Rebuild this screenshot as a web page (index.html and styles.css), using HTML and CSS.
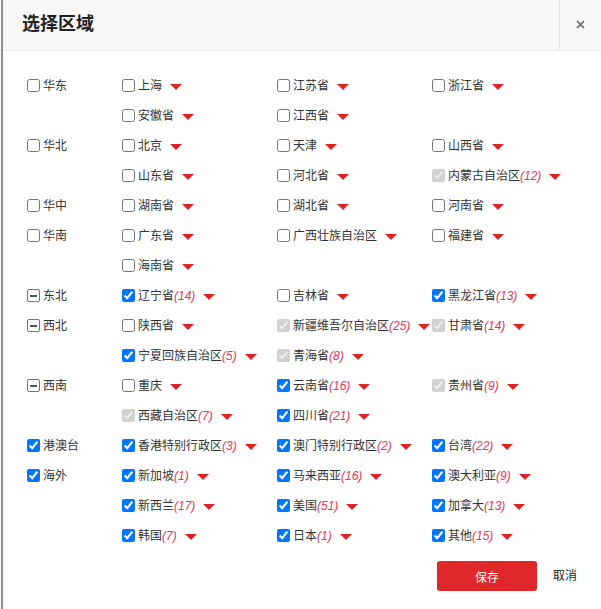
FILE: index.html
```html
<!DOCTYPE html>
<html lang="zh-CN">
<head>
<meta charset="utf-8">
<title>选择区域</title>
<link rel="stylesheet" href="styles.css">
</head>
<body>
<div class="dialog">
  <div class="header">
    <div class="title">选择区域</div>
    <div class="close">
      <svg width="9" height="9" viewBox="0 0 9 9"><path d="M1 1L8 8M8 1L1 8" stroke="#666" stroke-width="1.6" fill="none"/></svg>
    </div>
  </div>
  <div class="body">
    <div class="region">
      <label class="item rname"><input type="checkbox"><span>华东</span></label>
      <div class="provs">
        <label class="item"><input type="checkbox"><span>上海</span><i class="caret"></i></label>
        <label class="item"><input type="checkbox"><span>江苏省</span><i class="caret"></i></label>
        <label class="item"><input type="checkbox"><span>浙江省</span><i class="caret"></i></label>
        <label class="item"><input type="checkbox"><span>安徽省</span><i class="caret"></i></label>
        <label class="item"><input type="checkbox"><span>江西省</span><i class="caret"></i></label>
      </div>
    </div>
    <div class="region">
      <label class="item rname"><input type="checkbox"><span>华北</span></label>
      <div class="provs">
        <label class="item"><input type="checkbox"><span>北京</span><i class="caret"></i></label>
        <label class="item"><input type="checkbox"><span>天津</span><i class="caret"></i></label>
        <label class="item"><input type="checkbox"><span>山西省</span><i class="caret"></i></label>
        <label class="item"><input type="checkbox"><span>山东省</span><i class="caret"></i></label>
        <label class="item"><input type="checkbox"><span>河北省</span><i class="caret"></i></label>
        <label class="item"><input type="checkbox" checked disabled><span>内蒙古自治区</span><em>(12)</em><i class="caret"></i></label>
      </div>
    </div>
    <div class="region">
      <label class="item rname"><input type="checkbox"><span>华中</span></label>
      <div class="provs">
        <label class="item"><input type="checkbox"><span>湖南省</span><i class="caret"></i></label>
        <label class="item"><input type="checkbox"><span>湖北省</span><i class="caret"></i></label>
        <label class="item"><input type="checkbox"><span>河南省</span><i class="caret"></i></label>
      </div>
    </div>
    <div class="region">
      <label class="item rname"><input type="checkbox"><span>华南</span></label>
      <div class="provs">
        <label class="item"><input type="checkbox"><span>广东省</span><i class="caret"></i></label>
        <label class="item"><input type="checkbox"><span>广西壮族自治区</span><i class="caret"></i></label>
        <label class="item"><input type="checkbox"><span>福建省</span><i class="caret"></i></label>
        <label class="item"><input type="checkbox"><span>海南省</span><i class="caret"></i></label>
      </div>
    </div>
    <div class="region">
      <label class="item rname"><b class="indet"></b><span>东北</span></label>
      <div class="provs">
        <label class="item"><input type="checkbox" checked><span>辽宁省</span><em>(14)</em><i class="caret"></i></label>
        <label class="item"><input type="checkbox"><span>吉林省</span><i class="caret"></i></label>
        <label class="item"><input type="checkbox" checked><span>黑龙江省</span><em>(13)</em><i class="caret"></i></label>
      </div>
    </div>
    <div class="region">
      <label class="item rname"><b class="indet"></b><span>西北</span></label>
      <div class="provs">
        <label class="item"><input type="checkbox"><span>陕西省</span><i class="caret"></i></label>
        <label class="item"><input type="checkbox" checked disabled><span>新疆维吾尔自治区</span><em>(25)</em><i class="caret"></i></label>
        <label class="item"><input type="checkbox" checked disabled><span>甘肃省</span><em>(14)</em><i class="caret"></i></label>
        <label class="item"><input type="checkbox" checked><span>宁夏回族自治区</span><em>(5)</em><i class="caret"></i></label>
        <label class="item"><input type="checkbox" checked disabled><span>青海省</span><em>(8)</em><i class="caret"></i></label>
      </div>
    </div>
    <div class="region">
      <label class="item rname"><b class="indet"></b><span>西南</span></label>
      <div class="provs">
        <label class="item"><input type="checkbox"><span>重庆</span><i class="caret"></i></label>
        <label class="item"><input type="checkbox" checked><span>云南省</span><em>(16)</em><i class="caret"></i></label>
        <label class="item"><input type="checkbox" checked disabled><span>贵州省</span><em>(9)</em><i class="caret"></i></label>
        <label class="item"><input type="checkbox" checked disabled><span>西藏自治区</span><em>(7)</em><i class="caret"></i></label>
        <label class="item"><input type="checkbox" checked><span>四川省</span><em>(21)</em><i class="caret"></i></label>
      </div>
    </div>
    <div class="region">
      <label class="item rname"><input type="checkbox" checked><span>港澳台</span></label>
      <div class="provs">
        <label class="item"><input type="checkbox" checked><span>香港特别行政区</span><em>(3)</em><i class="caret"></i></label>
        <label class="item"><input type="checkbox" checked><span>澳门特别行政区</span><em>(2)</em><i class="caret"></i></label>
        <label class="item"><input type="checkbox" checked><span>台湾</span><em>(22)</em><i class="caret"></i></label>
      </div>
    </div>
    <div class="region">
      <label class="item rname"><input type="checkbox" checked><span>海外</span></label>
      <div class="provs">
        <label class="item"><input type="checkbox" checked><span>新加坡</span><em>(1)</em><i class="caret"></i></label>
        <label class="item"><input type="checkbox" checked><span>马来西亚</span><em>(16)</em><i class="caret"></i></label>
        <label class="item"><input type="checkbox" checked><span>澳大利亚</span><em>(9)</em><i class="caret"></i></label>
        <label class="item"><input type="checkbox" checked><span>新西兰</span><em>(17)</em><i class="caret"></i></label>
        <label class="item"><input type="checkbox" checked><span>美国</span><em>(51)</em><i class="caret"></i></label>
        <label class="item"><input type="checkbox" checked><span>加拿大</span><em>(13)</em><i class="caret"></i></label>
        <label class="item"><input type="checkbox" checked><span>韩国</span><em>(7)</em><i class="caret"></i></label>
        <label class="item"><input type="checkbox" checked><span>日本</span><em>(1)</em><i class="caret"></i></label>
        <label class="item"><input type="checkbox" checked><span>其他</span><em>(15)</em><i class="caret"></i></label>
      </div>
    </div>
  </div>
  <div class="footer">
    <button class="save" type="button">保存</button>
    <a class="cancel">取消</a>
  </div>
</div>
</body>
</html>
```

FILE: styles.css
```css
* { box-sizing: border-box; }
html, body {
  margin: 0;
  padding: 0;
  background: #fff;
}
body {
  font-family: "Liberation Sans", "Noto Sans CJK SC", sans-serif;
  font-size: 12px;
  color: #333;
}
.dialog {
  margin-left: 1px;
  border-left: 2px solid #8f8f8f;
  height: 609px;
  overflow: hidden;
}
.header {
  display: flex;
  height: 51px;
  background: #f8f8f8;
  border-bottom: 1px solid #e8e8e8;
}
.title {
  flex: 1;
  padding-left: 19px;
  font-size: 18px;
  font-weight: bold;
  color: #222;
  line-height: 49px;
}
.close {
  width: 42px;
  border-left: 1px solid #e8e8e8;
  display: flex;
  align-items: center;
  justify-content: center;
  padding-bottom: 1px;
}
.body {
  padding: 20px 0 0 24px;
}
.region {
  display: flex;
  align-items: flex-start;
}
.rname {
  width: 95px;
  flex: none;
}
.provs {
  display: grid;
  grid-template-columns: 155px 155px 155px;
  grid-auto-rows: 30px;
}
.item {
  display: flex;
  align-items: center;
  height: 30px;
  white-space: nowrap;
  line-height: 16px;
  color: #333;
}
.item input {
  width: 13px;
  height: 13px;
  margin: 0 3px 1px 0;
  flex: none;
}
.item em {
  font-style: italic;
  color: #e2365a;
}
.indet {
  width: 13px;
  height: 13px;
  margin: 0 3px 1px 0;
  border: 1px solid #767676;
  border-radius: 2px;
  background: #fff;
  display: flex;
  align-items: center;
  justify-content: center;
  flex: none;
}
.indet::after {
  content: "";
  width: 7px;
  height: 2px;
  background: #555;
}
.caret {
  display: inline-block;
  width: 0;
  height: 0;
  margin-left: 8px;
  margin-top: 2px;
  border-top: 6px solid #dd2424;
  border-left: 6px solid transparent;
  border-right: 6px solid transparent;
}
.footer {
  display: flex;
  justify-content: flex-end;
  align-items: center;
  margin-top: 10px;
  padding-right: 24px;
}
.save {
  width: 100px;
  height: 30px;
  border: none;
  border-radius: 3px;
  background: #e0282a;
  color: #fff;
  font-family: "Liberation Sans", "Noto Sans CJK SC", sans-serif;
  font-size: 12px;
  padding: 0;
}
.cancel {
  margin-left: 16px;
  color: #222;
  font-size: 12px;
  line-height: 30px;
}
```
